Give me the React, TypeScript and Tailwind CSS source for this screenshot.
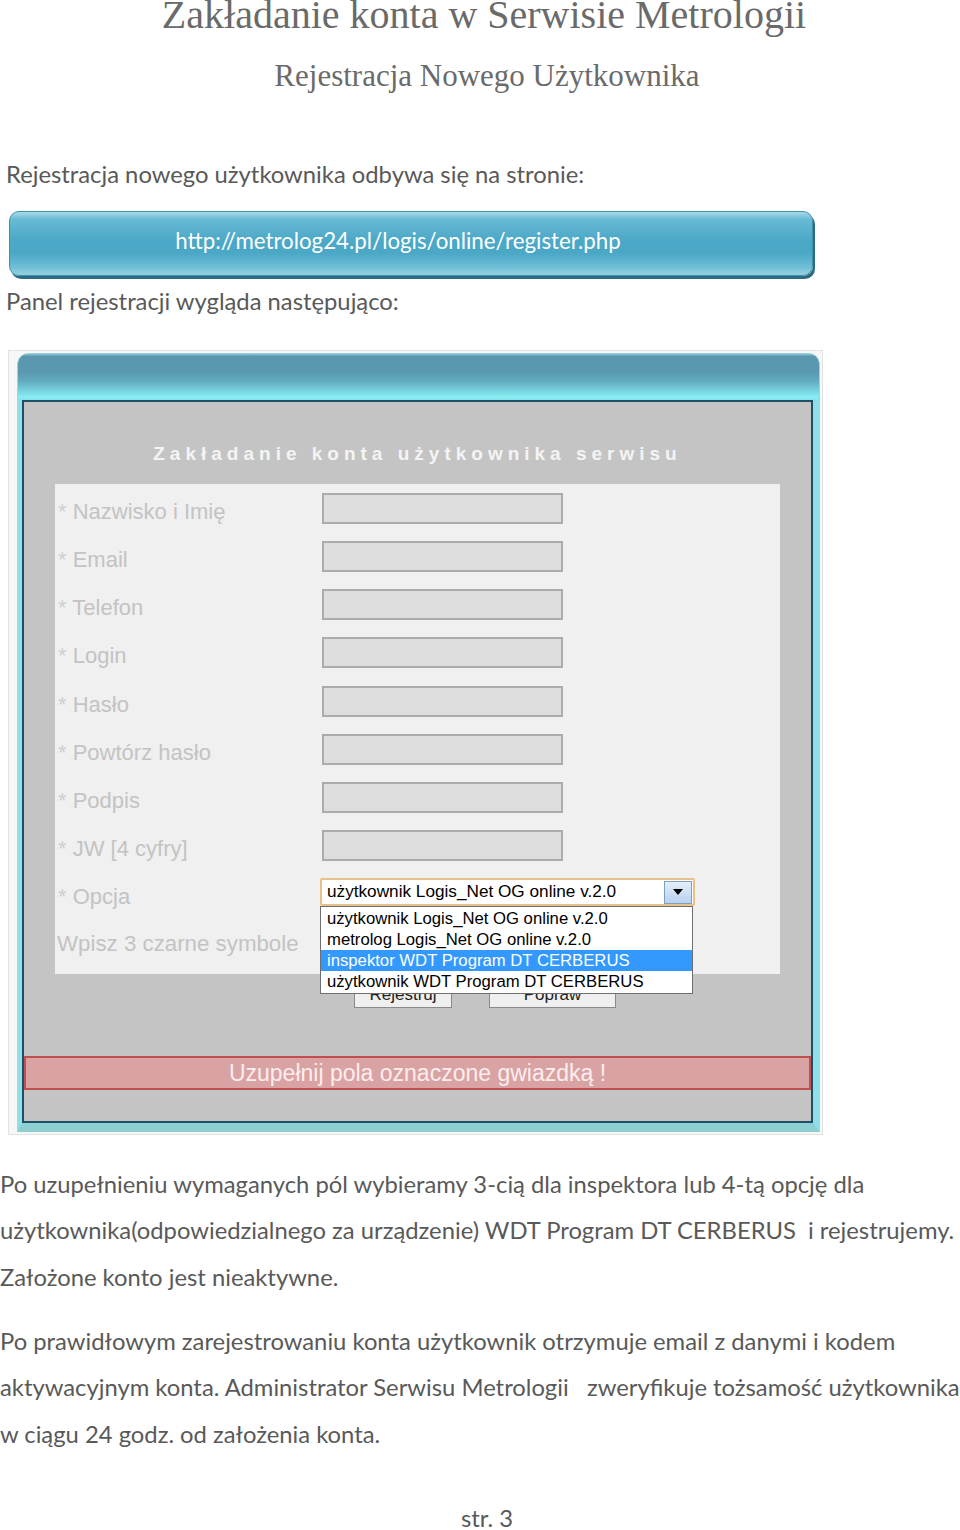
import React from 'react';

const serif = "font-['Liberation_Serif','Times_New_Roman',serif]";
const body = "font-['Lato','Open_Sans',sans-serif]";
const ui = "font-['Liberation_Sans',Arial,sans-serif]";

const fields = ['Nazwisko i Imię', 'Email', 'Telefon', 'Login', 'Hasło', 'Powtórz hasło', 'Podpis', 'JW [4 cyfry]'];

const options = [
  'użytkownik Logis_Net OG online v.2.0',
  'metrolog Logis_Net OG online v.2.0',
  'inspektor WDT Program DT CERBERUS',
  'użytkownik WDT Program DT CERBERUS',
];

function Label({ text, star = true }: { text: string; star?: boolean }) {
  return (
    <div className={`w-[264px] mt-[3px] leading-[31px] text-[22px] text-[#c3c3c3] whitespace-nowrap ${ui}`}>
      {star && <span className="text-[#cfcfcf]">* </span>}
      {text}
    </div>
  );
}

function App() {
  return (
    <div className={`w-[960px] h-[1530px] bg-white overflow-hidden text-[#595959] ${body}`}>
      {/* Headings */}
      <h1 className={`pl-[8px] text-center text-[40px] leading-[30px] text-[#6a6a6a] whitespace-nowrap ${serif}`}>
        Zakładanie konta w Serwisie Metrologii
      </h1>
      <h2 className={`mt-[30px] pl-[14px] text-center text-[31px] leading-none text-[#6a6a6a] whitespace-nowrap ${serif}`}>
        Rejestracja Nowego Użytkownika
      </h2>

      <p className="mt-[68px] pl-[6px] text-[23.8px] leading-[30px] whitespace-nowrap">
        Rejestracja nowego użytkownika odbywa się na stronie:
      </p>

      {/* URL bar */}
      <div className="mt-[22px] ml-[9px] w-[804px] h-[65px] rounded-[10px] border border-[#3f91ad] bg-[linear-gradient(to_bottom,#a9dae8_0%,#67bad4_12%,#4ba8c7_45%,#4aa7c6_65%,#70bfd7_88%,#98d0e0_100%)] shadow-[2px_3px_0_#2c6c82] flex items-center justify-center pr-[26px] pb-[6px]">
        <span className="text-white text-[22.3px] whitespace-nowrap">http://metrolog24.pl/logis/online/register.php</span>
      </div>

      <p className="mt-[10px] pl-[6px] text-[23.8px] leading-[30px] whitespace-nowrap">
        Panel rejestracji wygląda następująco:
      </p>

      {/* Screenshot of registration panel */}
      <div className="mt-[34px] ml-[8px] w-[815px] border border-[#e2e2e2] bg-[#f7f7f7] pl-[8px] pr-[2px] pt-[2px] pb-[2px]">
        <div className="h-[47px] rounded-t-[12px] border-x border-[#8fdbe4] bg-[linear-gradient(to_bottom,#a5d8e4_0%,#5b97ae_7%,#5a99b0_40%,#62abc0_60%,#76d3df_80%,#8bedf2_94%,#7fe4ea_100%)]" />
        <div className="border-l-[5px] border-r-[7px] border-b-[9px] border-l-[#8fdfe8] border-r-[#8fdfe8] border-b-[#8ecfd1]">
          <div className="border-2 border-[#1d4f66] bg-[#c4c4c4] pt-[40px] pb-[31px]">
            <div className={`h-[24px] leading-[24px] text-center text-[19px] font-bold tracking-[5px] text-[#f4f4f4] whitespace-nowrap ${ui}`}>
              Zakładanie konta użytkownika serwisu
            </div>

            {/* Form */}
            <div className="mt-[18px] ml-[31px] w-[725px] h-[490px] bg-[#f0f0f0] pt-[9px] pl-[3px]">
              {fields.map((f) => (
                <div key={f} className="h-[48.15px] flex items-start">
                  <Label text={f} />
                  <div className="w-[241px] h-[31px] bg-[#dedede] border-2 border-[#ababab]" />
                </div>
              ))}
              <div className="h-[48.15px] flex items-start">
                <Label text="Opcja" />
                <div className="relative -ml-[2px] z-10">
                  <div className={`w-[375px] h-[28px] rounded-[2px] border-2 border-[#e8c08a] bg-white flex items-center justify-between pl-[5px] pr-[1px] ${ui}`}>
                    <span className="text-[17.2px] text-black whitespace-nowrap">{options[0]}</span>
                    <div className="w-[28px] h-[23px] border border-[#7fa0c2] bg-[linear-gradient(to_bottom,#e3eef9,#b8d2ee)] flex items-center justify-center">
                      <svg width="10" height="6" viewBox="0 0 10 6"><path d="M0 0h10L5 6z" fill="#000" /></svg>
                    </div>
                  </div>
                  <div className={`absolute left-0 top-full w-[373px] border border-[#6f6f6f] bg-white py-[1px] ${ui}`}>
                    {options.map((o, i) => (
                      <div
                        key={o}
                        className={`h-[21px] leading-[21px] pl-[6px] text-[16.7px] whitespace-nowrap ${i === 2 ? 'bg-[#3399ff] text-white' : 'text-black'}`}
                      >
                        {o}
                      </div>
                    ))}
                  </div>
                </div>
              </div>
              <div className="h-[48.15px] flex items-start">
                <div className={`w-[264px] mt-[2px] -ml-[1px] leading-[31px] text-[22.3px] text-[#c3c3c3] whitespace-nowrap ${ui}`}>
                  Wpisz 3 czarne symbole
                </div>
              </div>
            </div>

            {/* Buttons (partly hidden by the open list) */}
            <div className={`mt-[7px] ml-[330px] flex gap-[37px] ${ui}`}>
              <div className="w-[98px] h-[27px] border border-[#8a8a8a] bg-[#efefef] text-[17px] leading-[25px] text-center text-[#222]">Rejestruj</div>
              <div className="w-[127px] h-[27px] border border-[#8a8a8a] bg-[#efefef] text-[17px] leading-[25px] text-center text-[#222]">Popraw</div>
            </div>

            {/* Error bar */}
            <div className={`mt-[48px] h-[34px] border-2 border-[#c0504f] bg-[#daa3a3] flex items-center justify-center text-[23px] text-[#fbeeee] whitespace-nowrap ${ui}`}>
              Uzupełnij pola oznaczone gwiazdką !
            </div>
          </div>
        </div>
      </div>

      {/* Description */}
      <div className="mt-[25.6px] text-[23.8px] leading-[46.5px] whitespace-nowrap">
        <p>Po uzupełnieniu wymaganych pól wybieramy 3-cią dla inspektora lub 4-tą opcję dla</p>
        <p>użytkownika(odpowiedzialnego za urządzenie) WDT Program DT CERBERUS&nbsp; i rejestrujemy.</p>
        <p>Założone konto jest nieaktywne.</p>
      </div>
      <div className="mt-[17.6px] text-[23.8px] leading-[46.5px] whitespace-nowrap">
        <p>Po prawidłowym zarejestrowaniu konta użytkownik otrzymuje email z danymi i kodem</p>
        <p>aktywacyjnym konta. Administrator Serwisu Metrologii &nbsp; zweryfikuje tożsamość użytkownika</p>
        <p>w ciągu 24 godz. od założenia konta.</p>
      </div>
      <p className="mt-[49px] pl-[14px] text-center text-[23.8px] leading-[24px]">str. 3</p>
    </div>
  );
}

export default App;
